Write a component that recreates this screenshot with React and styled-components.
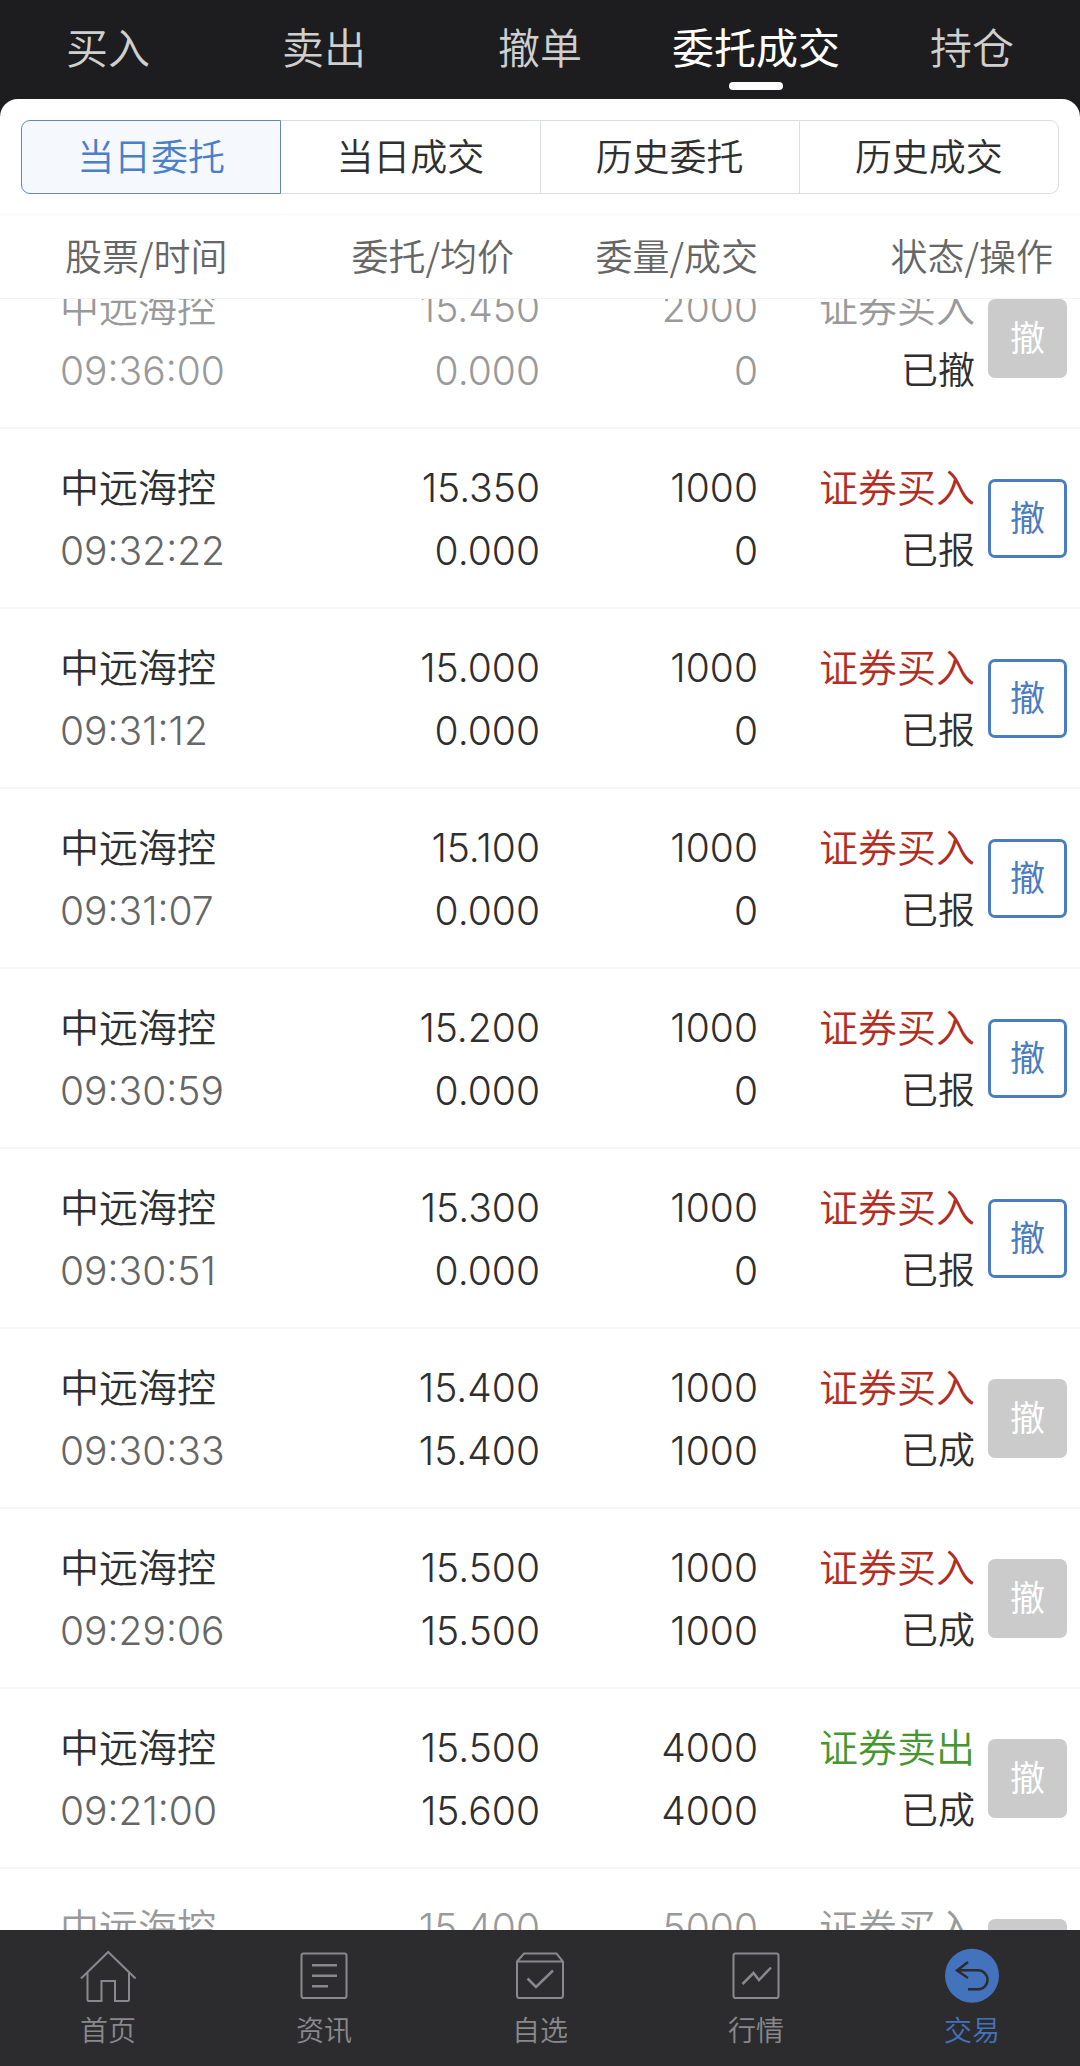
import { useLayoutEffect, useRef, useState } from "react";
import styled, { createGlobalStyle } from "styled-components";

const GlobalStyle = createGlobalStyle`
  * {
    box-sizing: border-box;
  }
  body {
    margin: 0;
    background: #1d1d1f;
    font-family: "Noto Sans CJK SC", sans-serif;
    font-weight: 350;
    color: #2f2f2f;
  }
  button {
    font: inherit;
    padding: 0;
    cursor: pointer;
  }
`;

const Page = styled.div`
  display: flex;
  flex-direction: column;
  height: 100vh;
`;

const TopNav = styled.nav`
  flex: none;
  display: grid;
  grid-template-columns: repeat(5, 1fr);
  background: #1d1d1f;
`;

const TopTab = styled.button`
  display: flex;
  flex-direction: column;
  align-items: center;
  height: 99px;
  padding-top: 16px;
  border: 0;
  background: none;
  color: ${({ $active }) => ($active ? "#ffffff" : "#cfcfcf")};
  font-size: 42px;
  font-weight: ${({ $active }) => ($active ? 400 : 350)};
  line-height: 60px;
  white-space: nowrap;

  &::after {
    content: "";
    width: 54px;
    height: 8px;
    margin-top: 6px;
    border-radius: 4px;
    background: ${({ $active }) => ($active ? "#ffffff" : "transparent")};
  }
`;

const Sheet = styled.main`
  flex: 1;
  min-height: 0;
  display: flex;
  flex-direction: column;
  border-radius: 18px 18px 0 0;
  background: #ffffff;
  overflow: hidden;
`;

const Segments = styled.div`
  flex: none;
  display: flex;
  padding: 21px 21px 20px;
  border-bottom: 1px solid #f8f8f8;
`;

const Segment = styled.button`
  flex: 1;
  height: 74px;
  padding-bottom: 4px;
  border: 1px solid ${({ $active }) => ($active ? "#6189b4" : "#dcdfe0")};
  border-left-width: ${({ $active, $first }) => ($active || $first ? 1 : 0)}px;
  background: ${({ $active }) => ($active ? "#f5f8fd" : "#ffffff")};
  color: ${({ $active }) => ($active ? "#4a7fcb" : "#2f2f2f")};
  font-size: 37px;
  line-height: 54px;

  &:first-child {
    border-radius: 9px 0 0 9px;
  }
  &:last-child {
    border-radius: 0 9px 9px 0;
  }
`;

const Scroller = styled.div`
  flex: 1;
  min-height: 0;
  overflow-y: auto;
  scrollbar-width: none;
`;

const Table = styled.table`
  width: 100%;
  table-layout: fixed;
  border-spacing: 0;
`;

const HeadCell = styled.th`
  position: sticky;
  top: 0;
  height: 84px;
  padding: 0 ${({ $right }) => $right || 0}px 4px ${({ $left }) => $left || 0}px;
  border-bottom: 1px solid #f3f3f3;
  background: #ffffff;
  color: #666666;
  font-size: 37px;
  font-weight: 350;
  line-height: 54px;
  text-align: ${({ $left }) => ($left ? "left" : "right")};
  white-space: nowrap;
`;

const Cell = styled.td`
  height: 180px;
  padding: 0 0 0 ${({ $left }) => $left || 0}px;
  border-bottom: 2px solid #f6f6f6;
  text-align: ${({ $left }) => ($left ? "left" : "right")};
  white-space: nowrap;
`;

const colors = {
  normal: "#2f2f2f",
  time: "#666666",
  faded: "#999999",
  buy: "#b42d22",
  sell: "#45962f",
};

const Line = styled.div`
  padding-bottom: 3px;
  color: ${({ $tone }) => colors[$tone || "normal"]};
  font-size: ${({ $small }) => ($small ? 37 : 39)}px;
  line-height: 60px;
`;

// digits sit a little lower than the characters beside them
const Num = styled(Line)`
  padding: 2px 0 0;
  font-family: Inter, "Noto Sans CJK SC", sans-serif;
  font-size: 39px;
  font-weight: 300;
  line-height: 61px;
`;

const CancelButton = styled.button`
  display: block;
  width: 79px;
  height: 79px;
  padding-bottom: 4px;
  border: 3px solid #4a7cc0;
  border-radius: 7px;
  background: #ffffff;
  color: #4a7cc0;
  font-size: 35px;
  font-weight: 400;
  line-height: 50px;

  &:disabled {
    border-color: #cbcbcb;
    background: #cbcbcb;
    color: #ffffff;
    cursor: default;
  }
`;

const BottomNav = styled.nav`
  flex: none;
  display: grid;
  grid-template-columns: repeat(5, 1fr);
  height: 136px;
  background: #2c2c2e;
`;

const BottomLink = styled.a`
  display: flex;
  flex-direction: column;
  align-items: center;
  padding-top: 18px;
  color: ${({ $active }) => ($active ? "#4473bd" : "#89898d")};
  font-size: 28px;
  line-height: 40px;
  text-decoration: none;

  svg {
    display: block;
    margin-bottom: 5px;
  }
`;

const topTabs = ["买入", "卖出", "撤单", "委托成交", "持仓"];
const segments = ["当日委托", "当日成交", "历史委托", "历史成交"];

const orders = [
  { time: "09:36:00", price: "15.450", avg: "0.000", qty: 2000, done: 0, side: "证券买入", status: "已撤", faded: true },
  { time: "09:32:22", price: "15.350", avg: "0.000", qty: 1000, done: 0, side: "证券买入", status: "已报" },
  { time: "09:31:12", price: "15.000", avg: "0.000", qty: 1000, done: 0, side: "证券买入", status: "已报" },
  { time: "09:31:07", price: "15.100", avg: "0.000", qty: 1000, done: 0, side: "证券买入", status: "已报" },
  { time: "09:30:59", price: "15.200", avg: "0.000", qty: 1000, done: 0, side: "证券买入", status: "已报" },
  { time: "09:30:51", price: "15.300", avg: "0.000", qty: 1000, done: 0, side: "证券买入", status: "已报" },
  { time: "09:30:33", price: "15.400", avg: "15.400", qty: 1000, done: 1000, side: "证券买入", status: "已成" },
  { time: "09:29:06", price: "15.500", avg: "15.500", qty: 1000, done: 1000, side: "证券买入", status: "已成" },
  { time: "09:21:00", price: "15.500", avg: "15.600", qty: 4000, done: 4000, side: "证券卖出", status: "已成" },
  { time: "09:20:00", price: "15.400", avg: "0.000", qty: 5000, done: 0, side: "证券买入", status: "已撤", faded: true },
];

const Icon = ({ children }) => (
  <svg width="56" height="56" viewBox="0 0 56 56" fill="none" stroke="currentColor" strokeWidth="2" aria-hidden="true">
    {children}
  </svg>
);

const bottomLinks = [
  {
    label: "首页",
    icon: (
      <Icon>
        <path d="M1 30.500L28.200 4L55.500 30.500" />
        <path d="M7.500 25V51.500Q7.500 53 9 53H21.500V33H35V53H47.500Q49 53 49 51.500V25" />
      </Icon>
    ),
  },
  {
    label: "资讯",
    icon: (
      <Icon>
        <rect x="5.500" y="5.500" width="45" height="44.500" rx="2" />
        <path d="M16 17.300H41M16 27.800H41M16 38.200H32" strokeWidth="2.500" />
      </Icon>
    ),
  },
  {
    label: "自选",
    icon: (
      <Icon>
        <path d="M5 13.500L12 5.500H44.500L51 13.500V47.500Q51 50 48.500 50H7.500Q5 50 5 47.500ZM5 13.500H51" />
        <path d="M15.500 30.500L24 39L41 22.500" strokeWidth="2.500" />
      </Icon>
    ),
  },
  {
    label: "行情",
    icon: (
      <Icon>
        <rect x="5.500" y="5.500" width="45" height="44.500" rx="2" />
        <path d="M14.500 36L25.500 25L31 32L43 19.500" strokeWidth="2.500" />
      </Icon>
    ),
  },
  {
    label: "交易",
    icon: (
      <Icon>
        <circle cx="28" cy="27.700" r="27" fill="currentColor" stroke="none" />
        <path d="M24 14L13 22.500L24 30M13 22.300H34A9.500 9.500 0 0 1 34 41.300H24" stroke="#2c2c2e" strokeWidth="2.500" />
      </Icon>
    ),
  },
];

const OrderRow = ({ order }) => {
  const tone = order.faded ? "faded" : "normal";
  const sideTone = order.side === "证券卖出" ? "sell" : "buy";
  return (
    <tr>
      <Cell $left={60}>
        <Line $tone={tone}>中远海控</Line>
        <Num $tone={order.faded ? "faded" : "time"}>{order.time}</Num>
      </Cell>
      <Cell>
        <Num $tone={tone}>{order.price}</Num>
        <Num $tone={tone}>{order.avg}</Num>
      </Cell>
      <Cell>
        <Num $tone={tone}>{order.qty}</Num>
        <Num $tone={tone}>{order.done}</Num>
      </Cell>
      <Cell>
        <Line $tone={order.faded ? "faded" : sideTone}>{order.side}</Line>
        <Line $small>{order.status}</Line>
      </Cell>
      <Cell $left={13}>
        <CancelButton disabled={order.status !== "已报"}>撤</CancelButton>
      </Cell>
    </tr>
  );
};

const App = () => {
  const [tab, setTab] = useState(3);
  const [segment, setSegment] = useState(0);
  const scroller = useRef(null);

  // the newest order is partly scrolled under the header
  useLayoutEffect(() => {
    scroller.current.scrollTop = 50;
  }, []);

  return (
    <Page>
      <GlobalStyle />
      <TopNav>
        {topTabs.map((name, i) => (
          <TopTab key={name} $active={i === tab} onClick={() => setTab(i)}>
            {name}
          </TopTab>
        ))}
      </TopNav>
      <Sheet>
        <Segments>
          {segments.map((name, i) => (
            <Segment key={name} $first={i === 0} $active={i === segment} onClick={() => setSegment(i)}>
              {name}
            </Segment>
          ))}
        </Segments>
        <Scroller ref={scroller}>
          <Table>
            <colgroup>
              <col />
              <col width="216" />
              <col width="218" />
              <col width="217" />
              <col width="105" />
            </colgroup>
            <thead>
              <tr>
                <HeadCell $left={65}>股票/时间</HeadCell>
                <HeadCell $right={26}>委托/均价</HeadCell>
                <HeadCell>委量/成交</HeadCell>
                <HeadCell $right={27} colSpan={2}>状态/操作</HeadCell>
              </tr>
            </thead>
            <tbody>
              {orders.map((order) => (
                <OrderRow key={order.time} order={order} />
              ))}
            </tbody>
          </Table>
        </Scroller>
      </Sheet>
      <BottomNav>
        {bottomLinks.map((link, i) => (
          <BottomLink key={link.label} href="#" $active={i === 4}>
            {link.icon}
            {link.label}
          </BottomLink>
        ))}
      </BottomNav>
    </Page>
  );
};

export default App;
